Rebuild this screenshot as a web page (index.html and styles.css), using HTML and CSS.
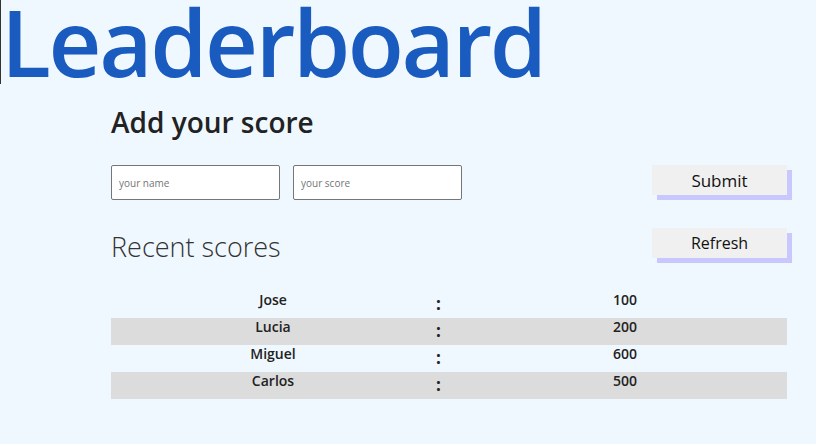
FILE: index.html
```html
<!DOCTYPE html>
<html>
<head>
<meta charset="utf-8">
<link rel="stylesheet" href="styles.css">
</head>
<body>
<h1 class="title">Leaderboard</h1>
<main class="content">
  <h2 class="add-title">Add your score</h2>
  <form class="score-form">
    <input class="field" type="text" placeholder="your name">
    <input class="field" type="text" placeholder="your score">
    <button class="btn btn-submit" type="button">Submit</button>
  </form>
  <div class="recent-head">
    <h2 class="recent-title">Recent scores</h2>
    <button class="btn btn-refresh" type="button">Refresh</button>
  </div>
  <div class="scores">
    <div class="row"><span class="name">Jose</span><span class="sep">:</span><span class="score">100</span></div>
    <div class="row alt"><span class="name">Lucia</span><span class="sep">:</span><span class="score">200</span></div>
    <div class="row"><span class="name">Miguel</span><span class="sep">:</span><span class="score">600</span></div>
    <div class="row alt"><span class="name">Carlos</span><span class="sep">:</span><span class="score">500</span></div>
  </div>
</main>
</body>
</html>
```
FILE: styles.css
```css
html, body {
  margin: 0;
  padding: 0;
}
body {
  background: #f0f8ff;
  font-family: "Open Sans", "Noto Sans", sans-serif;
  color: #222;
  height: 444px;
  overflow: hidden;
}
.title {
  margin: 0;
  font-size: 92px;
  font-weight: 600;
  line-height: 84px;
  color: #1a5bbf;
  letter-spacing: -2.4px;
  border-left: 1px solid #333;
  width: max-content;
}
.content {
  margin-left: 111px;
  width: 676px;
}
.add-title {
  margin: 18px 0 0 0;
  font-size: 28px;
  font-weight: 600;
  line-height: 40px;
  color: #222;
}
.score-form {
  display: flex;
  align-items: flex-start;
  gap: 13px;
  margin-top: 23px;
}
.field {
  box-sizing: border-box;
  width: 169px;
  height: 35px;
  border: 1px solid #767676;
  border-radius: 2px;
  background: #fff;
  padding: 0 7px;
  font-family: "Open Sans", sans-serif;
  font-size: 10px;
  color: #222;
}
.field::placeholder {
  color: #757575;
}
.btn {
  box-sizing: border-box;
  width: 135px;
  height: 30px;
  border: none;
  background: #f0f0f0;
  box-shadow: 5px 5px 0 #c8c8ff;
  font-family: "Open Sans", sans-serif;
  color: #111;
  padding: 0;
  cursor: pointer;
}
.btn-submit {
  margin-left: auto;
  font-size: 17px;
}
.recent-head {
  display: flex;
  align-items: flex-start;
  justify-content: space-between;
  margin-top: 28px;
}
.recent-title {
  margin: 3px 0 0 0;
  font-size: 27px;
  font-weight: 300;
  line-height: 32px;
  color: #333;
}
.btn-refresh {
  font-size: 16px;
}
.scores {
  margin-top: 28px;
}
.row {
  box-sizing: border-box;
  display: grid;
  grid-template-columns: 324px 28px 324px;
  height: 27px;
  align-items: start;
  font-size: 14px;
  line-height: 18px;
  font-weight: 600;
  color: #222;
}
.row.alt {
  background: #dcdcdc;
}
.name, .score {
  text-align: center;
}
.sep {
  font-size: 17px;
  line-height: 18px;
  padding-top: 4px;
  padding-left: 1px;
  font-weight: 700;
}
```
